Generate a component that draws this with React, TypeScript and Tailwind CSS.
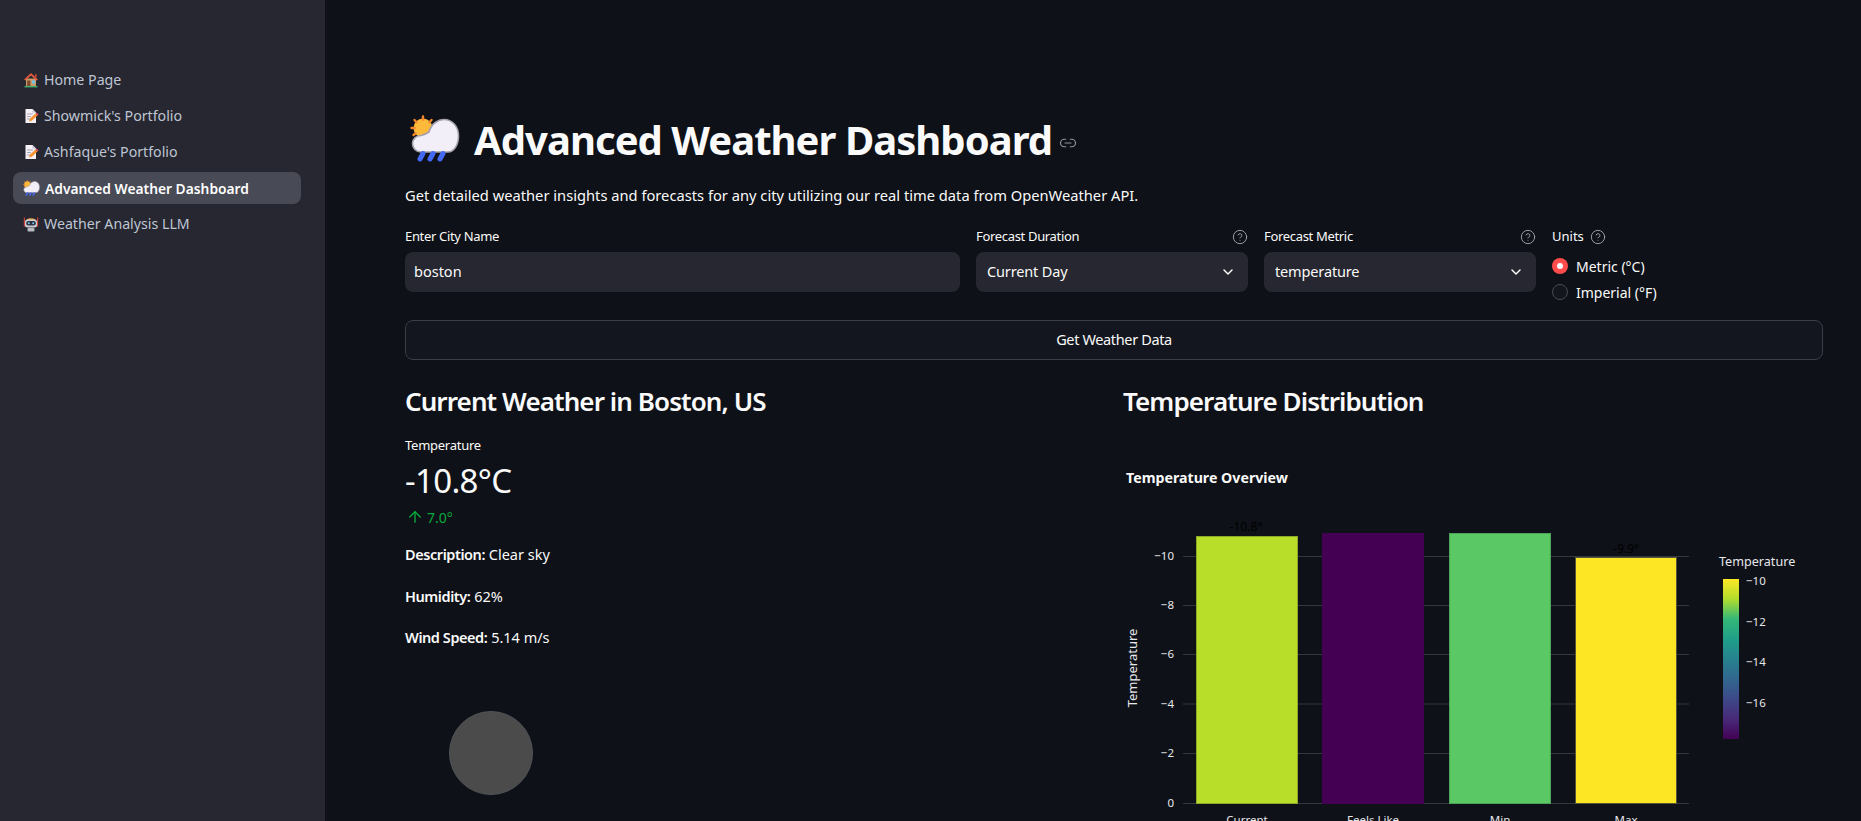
import { ArrowUp, ChevronDown, CircleHelp, Link2 } from "lucide-react";
import type { ReactNode } from "react";

function CloudIcon({ className }: { className: string }) {
  return (
    <svg viewBox="0 0 50 47" className={className}>
      <circle cx="13" cy="13" r="9.5" fill="#fdb93a" />
      <g stroke="#f5862a" strokeWidth="2.4" strokeLinecap="round">
        <path d="M13 1.5v3M4.5 5l2 2.2M1.5 13h3M21.5 5l-2 2.2M3.5 20l2-1.5" />
      </g>
      <path d="M11 37 C6 37 2.5 33 2.5 28.5 C2.5 24 6 20.5 11 20.5 C13 20 16 19 19 17 C21 9 28 4.5 34 4.5 C42 4.5 48.5 11 48.5 21 C48.5 30 44 37 38 37 Z" fill="#f3eff9" stroke="#a5a1ab" strokeWidth="1.6" />
      <g stroke="#4469f5" strokeWidth="5" strokeLinecap="round">
        <path d="M13 38.5l-3 5.5M23 38.5l-3 5.5M33 38.5l-3 5.5" />
      </g>
    </svg>
  );
}

function HomeIcon() {
  return (
    <svg viewBox="0 0 16 16" className="w-4 h-4 shrink-0">
      <rect x="3" y="6.5" width="10" height="8" fill="#c99a6a" />
      <path d="M8 1 L15 7.5 L13.5 8.5 L8 3.5 L2.5 8.5 L1 7.5 Z" fill="#e2583e" />
      <rect x="12" y="2" width="1.6" height="3.5" fill="#c2432e" />
      <rect x="4.2" y="8.5" width="3.2" height="5.5" fill="#7c4a2a" />
      <rect x="9" y="8.5" width="3" height="3" fill="#6ec3e8" />
      <rect x="1.5" y="14" width="13" height="1.4" fill="#3fae6c" />
    </svg>
  );
}

function MemoIcon() {
  return (
    <svg viewBox="0 0 16 16" className="w-4 h-4 shrink-0">
      <path d="M2.5 1 H9.5 L13 4.5 V15 H2.5 Z" fill="#f4f0f6" />
      <path d="M9.5 1 V4.5 H13 Z" fill="#c9c2cf" />
      <path d="M4 6h6M4 8.5h4M4 11h3" stroke="#a9a4b0" strokeWidth="1" />
      <path d="M6 13.5 L6.8 10.8 L12.5 5.5 L14.5 7.5 L8.8 12.8 Z" fill="#f59331" />
      <path d="M12.5 5.5 L13.6 4.5 L15.6 6.5 L14.5 7.5 Z" fill="#ea4d6c" />
    </svg>
  );
}

function RobotIcon() {
  return (
    <svg viewBox="0 0 16 16" className="w-4 h-4 shrink-0">
      <path d="M3.5 4 C4 1.5 12 1.5 12.5 4 Z" fill="#e99b3a" />
      <rect x="0.8" y="1.5" width="1.2" height="9" fill="#d0413c" />
      <rect x="14" y="1.5" width="1.2" height="9" fill="#d0413c" />
      <rect x="2" y="3.5" width="12" height="8" rx="2.5" fill="#cfd0d6" />
      <rect x="3.2" y="5" width="9.6" height="4.6" rx="2" fill="#2b3140" />
      <circle cx="5.8" cy="7.2" r="1" fill="#7cc8f0" />
      <circle cx="10.2" cy="7.2" r="1" fill="#7cc8f0" />
      <rect x="4.5" y="12" width="7" height="3.4" rx="1" fill="#b9bac2" />
    </svg>
  );
}

function NavItem({ icon, label, active }: { icon: ReactNode; label: string; active?: boolean }) {
  return (
    <div className={`h-8 rounded-lg flex items-center gap-[5px] pl-[10px] ${active ? "bg-[#484a55] text-white font-semibold" : "text-[#bfc5d3]"}`}>
      {icon}
      <span className={`leading-none mt-[1px] ${active ? "text-[13.8px]" : "text-[14.2px]"}`}>{label}</span>
    </div>
  );
}

function Help() {
  return <CircleHelp size={16} strokeWidth={1.4} className="text-[#a3a6ad] shrink-0" />;
}

function Label({ text, help }: { text: string; help?: boolean }) {
  return (
    <div className="h-5 flex items-center justify-between text-[13px] tracking-[-0.025em] text-[#fafafa]">
      <span>{text}</span>
      {help && <Help />}
    </div>
  );
}

function Select({ value }: { value: string }) {
  return (
    <div className="h-10 rounded-lg bg-[#262730] flex items-center justify-between pl-[11px] pr-[12px] text-[14.5px] tracking-[-0.01em] text-[#fafafa]">
      <span>{value}</span>
      <ChevronDown size={16} strokeWidth={2.2} className="text-[#fafafa]" />
    </div>
  );
}

function Fact({ name, value }: { name: string; value: string }) {
  return (
    <p className="h-6 leading-6 text-[14.5px] text-[#fafafa]">
      <b className="font-semibold tracking-[-0.03em]">{name}:</b> {value}
    </p>
  );
}

const grid = [803, 753, 703.5, 654, 605, 556];
const ticks = ["0", "−2", "−4", "−6", "−8", "−10"];
const bars = [
  { x: 1196, y: 536, fill: "#b8de29", stroke: "#8fa82a", label: "Current" },
  { x: 1322, y: 533, fill: "#440154", stroke: "#440154", label: "Feels Like" },
  { x: 1449, y: 533, fill: "#5ac864", stroke: "#49a356", label: "Min" },
  { x: 1575, y: 557, fill: "#fde725", stroke: "#55533a", label: "Max" },
];

function Chart() {
  return (
    <svg viewBox="1123 450 738 371" className="block w-[738px] h-[371px] shrink-0">
      <defs>
        <linearGradient id="viridis" x1="0" y1="1" x2="0" y2="0">
          <stop offset="0" stopColor="#440154" />
          <stop offset="0.12" stopColor="#482878" />
          <stop offset="0.25" stopColor="#3e4989" />
          <stop offset="0.38" stopColor="#31688e" />
          <stop offset="0.5" stopColor="#26828e" />
          <stop offset="0.62" stopColor="#1f9e89" />
          <stop offset="0.75" stopColor="#35b779" />
          <stop offset="0.88" stopColor="#b5de2b" />
          <stop offset="1" stopColor="#fde725" />
        </linearGradient>
      </defs>
      <text x="1126" y="483" fontSize="14.2" fontWeight="700" fill="#fafafa">Temperature Overview</text>
      {grid.map((y, i) => (
        <g key={y}>
          <line x1="1183" x2="1689" y1={y + 0.5} y2={y + 0.5} stroke="#34373e" strokeWidth="1" />
          <text x="1174" y={y + 4} fontSize="11.5" textAnchor="end" fill="#e6e8ec">{ticks[i]}</text>
        </g>
      ))}
      {bars.map((b) => (
        <g key={b.label}>
          <rect x={b.x + 0.5} y={b.y + 0.5} width="101" height={803 - b.y} fill={b.fill} stroke={b.stroke} strokeWidth="1" />
          <text x={b.x + 51} y="824" fontSize="11.5" textAnchor="middle" fill="#e6e8ec">{b.label}</text>
        </g>
      ))}
      <text x="1246" y="531" fontSize="12" textAnchor="middle" fill="#000000">-10.8°</text>
      <text x="1626" y="553" fontSize="12" textAnchor="middle" fill="#000000">-9.9°</text>
      <text transform="translate(1137 668) rotate(-90)" fontSize="13" textAnchor="middle" fill="#e6e8ec">Temperature</text>
      <text x="1719" y="566" fontSize="12.6" fill="#e6e8ec">Temperature</text>
      <rect x="1723" y="579" width="16" height="160" fill="url(#viridis)" />
      {[["−10", 585], ["−12", 626], ["−14", 666], ["−16", 707]].map(([t, y]) => (
        <text key={t} x="1746" y={y} fontSize="11.5" fill="#e6e8ec">{t}</text>
      ))}
    </svg>
  );
}

export default function App() {
  return (
    <div className="h-[821px] w-full overflow-hidden flex bg-[#0e1117] font-['Noto_Sans',sans-serif] text-[#fafafa]">
      <aside className="w-[325px] shrink-0 bg-[#262730] pt-[64px] pl-[13px] pr-[24px] flex flex-col gap-1">
        <NavItem icon={<HomeIcon />} label="Home Page" />
        <NavItem icon={<MemoIcon />} label="Showmick's Portfolio" />
        <NavItem icon={<MemoIcon />} label="Ashfaque's Portfolio" />
        <NavItem icon={<CloudIcon className="w-[17px] h-4 shrink-0" />} label="Advanced Weather Dashboard" active />
        <NavItem icon={<RobotIcon />} label="Weather Analysis LLM" />
      </aside>
      <main className="flex-1 min-w-0 pl-20 pr-[38px] pt-[115px]">
        <div className="h-[47px] flex items-center">
          <CloudIcon className="w-[50px] h-[47px] ml-[5px] shrink-0" />
          <h1 className="ml-[14px] mt-[2px] text-[40px] font-bold leading-none tracking-[-0.024em]">Advanced Weather Dashboard</h1>
          <Link2 size={18} strokeWidth={1.6} className="ml-[7px] mt-[8px] text-[#8f939b]" />
        </div>
        <p className="mt-[21px] h-6 flex items-center text-[14.7px]">Get detailed weather insights and forecasts for any city utilizing our real time data from OpenWeather API.</p>
        <div className="mt-[20px] flex gap-4">
          <div className="w-[555px] flex flex-col gap-[5px]">
            <Label text="Enter City Name" />
            <div className="h-10 rounded-lg bg-[#262730] flex items-center pl-[9px] text-[14.5px]">boston</div>
          </div>
          <div className="w-[272px] flex flex-col gap-[5px]">
            <Label text="Forecast Duration" help />
            <Select value="Current Day" />
          </div>
          <div className="w-[272px] flex flex-col gap-[5px]">
            <Label text="Forecast Metric" help />
            <Select value="temperature" />
          </div>
          <div className="flex-1 flex flex-col">
            <div className="h-5 flex items-center gap-[6px] text-[13px]">
              <span>Units</span>
              <Help />
            </div>
            <div className="mt-[9px] flex items-center gap-[8px] h-5 text-[14px]">
              <span className="w-4 h-4 rounded-full bg-[#ff4b4b] flex items-center justify-center">
                <span className="w-[6px] h-[6px] rounded-full bg-white" />
              </span>
              Metric (°C)
            </div>
            <div className="mt-[6px] flex items-center gap-[8px] h-5 text-[14px]">
              <span className="w-4 h-4 rounded-full bg-[#14161d] border border-[#4a4c55]" />
              Imperial (°F)
            </div>
          </div>
        </div>
        <div className="mt-[18px] h-10 rounded-lg border border-[#3b3e46] bg-[#13161e] flex items-center justify-center text-[14.5px] tracking-[-0.025em]">Get Weather Data</div>
        <div className="mt-[23px] flex">
          <section className="w-[718px] shrink-0">
            <h2 className="h-9 flex items-center text-[26px] font-semibold leading-none tracking-[-0.035em]">Current Weather in Boston, US</h2>
            <div className="mt-[17px] h-5 flex items-center text-[13px] tracking-[-0.02em]">Temperature</div>
            <div className="mt-[2px] h-11 flex items-center text-[33px] leading-none tracking-[-0.02em]">-10.8°C</div>
            <div className="mt-[5px] h-5 flex items-center gap-[3px] pl-[1px] text-[14px] text-[#09ab3b]">
              <ArrowUp size={18} strokeWidth={1.8} />
              <span>7.0°</span>
            </div>
            <div className="mt-[15px] flex flex-col gap-[17.5px]">
              <Fact name="Description" value="Clear sky" />
              <Fact name="Humidity" value="62%" />
              <Fact name="Wind Speed" value="5.14 m/s" />
            </div>
            <div className="mt-[62px] ml-[44px] w-[84px] h-[84px] rounded-full bg-[#4b4b4b] border border-[#505356]" />
          </section>
          <section className="flex-1 min-w-0">
            <h2 className="h-9 flex items-center text-[26px] font-semibold leading-none tracking-[-0.035em] whitespace-nowrap">Temperature Distribution</h2>
            <div className="mt-[31px]">
              <Chart />
            </div>
          </section>
        </div>
      </main>
    </div>
  );
}
